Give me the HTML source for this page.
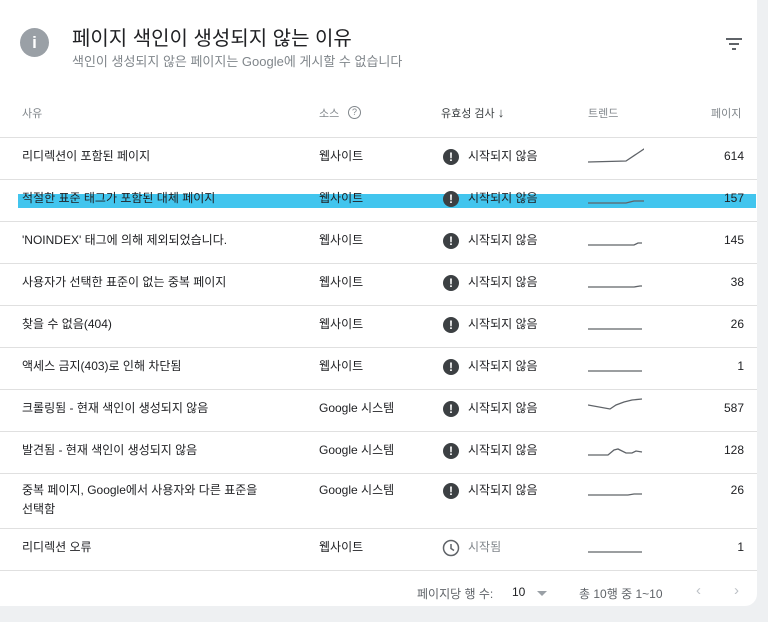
<!DOCTYPE html><html><head><meta charset="utf-8"><style>
body{margin:0;width:768px;height:622px;background:#eef0f2;font-family:"Liberation Sans","Noto Sans CJK KR",sans-serif;overflow:hidden;position:relative}
.card{position:absolute;left:0;top:0;width:757px;height:606px;background:#fff;border-radius:0 0 12px 0}
.a{position:absolute;white-space:nowrap}
.t{font-size:12px;color:#202124}
.h{font-size:11px;color:#80868b}
.line{position:absolute;left:0;width:757px;height:1px;background:#e0e0e0}
.ic{position:absolute;width:16px;height:16px;border-radius:50%;background:#3c4043;color:#fff;font-size:12px;font-weight:bold;text-align:center;line-height:16px}
</style></head><body><div class="card">
<div style="position:absolute;left:20px;top:28px;width:29px;height:29px;border-radius:50%;background:#9aa0a6;color:#fff;font:bold 17px/29px 'Liberation Sans',sans-serif;text-align:center">i</div>
<div class="a" style="left:72px;top:22px;font-size:20px;color:#202124">페이지 색인이 생성되지 않는 이유</div>
<div class="a" style="left:72px;top:51px;font-size:13px;color:#80868b">색인이 생성되지 않은 페이지는 Google에 게시할 수 없습니다</div>
<svg class="a" style="left:726px;top:38px" width="16" height="12"><path d="M0 1h16M3 6h10M6 11h4" stroke="#5f6368" stroke-width="2"/></svg>
<div class="a h" style="left:22px;top:105px">사유</div>
<div class="a h" style="left:319px;top:105px">소스</div>
<div class="a" style="left:348px;top:106px;width:11px;height:11px;border:1.3px solid #80868b;border-radius:50%;font-size:9px;text-align:center;line-height:11px;color:#80868b">?</div>
<div class="a" style="left:441px;top:105px;font-size:11px;color:#3c4043">유효성 검사 <span style="font-size:13px">↓</span></div>
<div class="a h" style="left:588px;top:105px">트렌드</div>
<div class="a h" style="left:711px;top:105px">페이지</div>
<div class="line" style="top:137px"></div>
<div style="position:absolute;left:18px;top:194px;width:738px;height:14px;background:#42c5ee"></div>
<div id="rows"></div>
<div class="line" style="top:570px"></div>
<div class="a" style="left:417px;top:585px;font-size:12px;color:#5f6368">페이지당 행 수:</div>
<div class="a" style="left:512px;top:585px;font-size:12px;color:#202124">10</div>
<div class="a" style="left:537px;top:591px;width:0;height:0;border:5px solid transparent;border-top-color:#9aa0a6;border-bottom:0"></div>
<div class="a" style="left:579px;top:585px;font-size:12px;color:#5f6368">총 10행 중 1~10</div>
<div class="a" style="left:696px;top:582px;font-size:15px;color:#bdc1c6">‹</div>
<div class="a" style="left:734px;top:582px;font-size:15px;color:#bdc1c6">›</div>
</div>
<script>
var R=[
["리디렉션이 포함된 페이지","웹사이트","614","M0 21 L38 20 L50 12 L56 8 L66 6 L76 5"],
["적절한 표준 태그가 포함된 대체 페이지","웹사이트","157","M0 20 L38 20 L46 18 L76 18"],
["'NOINDEX' 태그에 의해 제외되었습니다.","웹사이트","145","M0 20 L46 20 L50 18 L54 18"],
["사용자가 선택한 표준이 없는 중복 페이지","웹사이트","38","M0 20 L46 20 L52 19 L54 19"],
["찾을 수 없음(404)","웹사이트","26","M0 20 L54 20"],
["액세스 금지(403)로 인해 차단됨","웹사이트","1","M0 20 L54 20"],
["크롤링됨 - 현재 색인이 생성되지 않음","Google 시스템","587","M0 12 L22 16 L28 12 L36 9 L44 7 L54 6"],
["발견됨 - 현재 색인이 생성되지 않음","Google 시스템","128","M0 20 L20 20 L26 15 L30 14 L38 18 L44 18 L48 16 L54 17"],
["중복 페이지, Google에서 사용자와 다른 표준을<br>선택함","Google 시스템","26","M0 20 L40 20 L46 19 L54 19"],
["리디렉션 오류","웹사이트","1","M0 20 L54 20"]];
var tops=[137,179,221,263,305,347,389,431,473,528],h="";
R.forEach(function(r,i){var y=tops[i],c=i==8?y+8:y+10;
h+='<div class="a t" style="left:22px;top:'+c+'px;line-height:19px">'+r[0]+'</div>';
h+='<div class="a t" style="left:319px;top:'+c+'px;line-height:19px">'+r[1]+'</div>';
if(i<9){h+='<div class="ic" style="left:443px;top:'+(c+2)+'px">!</div><div class="a t" style="left:468px;top:'+c+'px;line-height:19px">시작되지 않음</div>';}
else{h+='<svg class="a" style="left:442px;top:'+(c+1)+'px" width="18" height="18"><circle cx="9" cy="9" r="7.5" fill="none" stroke="#5f6368" stroke-width="1.5"/><path d="M9 5v4.5l3 2" fill="none" stroke="#5f6368" stroke-width="1.5"/></svg><div class="a" style="left:468px;top:'+c+'px;line-height:19px;font-size:12px;color:#80868b">시작됨</div>';}
h+='<svg class="a" style="left:588px;top:'+(c-6)+'px" width="56" height="26"><path d="'+r[3]+'" fill="none" stroke="#5f6368" stroke-width="1.3"/></svg>';
h+='<div class="a t" style="right:13px;top:'+c+'px;line-height:19px">'+r[2]+'</div>';
if(i<9)h+='<div class="line" style="top:'+tops[i+1]+'px"></div>';});
document.getElementById('rows').outerHTML=h;
</script></body></html>
